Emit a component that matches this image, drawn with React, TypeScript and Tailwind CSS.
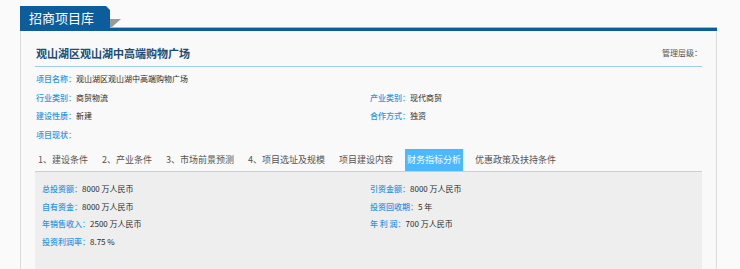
const font = { fontFamily: '"Noto Sans CJK SC", "Noto Sans", sans-serif' };

const infoRows: [string, string][][] = [
  [["项目名称", "观山湖区观山湖中高端购物广场"]],
  [
    ["行业类别", "商贸物流"],
    ["产业类别", "现代商贸"],
  ],
  [
    ["建设性质", "新建"],
    ["合作方式", "独资"],
  ],
  [["项目现状", ""]],
];

const finRows: [string, string][][] = [
  [
    ["总投资额", "8000 万人民币"],
    ["引资金额", "8000 万人民币"],
  ],
  [
    ["自有资金", "8000 万人民币"],
    ["投资回收期", "5 年"],
  ],
  [
    ["年销售收入", "2500 万人民币"],
    ["年 利 润", "700 万人民币"],
  ],
  [["投资利润率", "8.75 %"]],
];

const tabs = [
  "1、建设条件",
  "2、产业条件",
  "3、市场前景预测",
  "4、项目选址及规模",
  "项目建设内容",
  "财务指标分析",
  "优惠政策及扶持条件",
];

function Field({ label, value }: { label: string; value: string }) {
  return (
    <div className="whitespace-nowrap">
      <span className="text-[#2b95e3] font-medium">{label}：</span>
      <span className="text-[#2a2a2a]">{value}</span>
    </div>
  );
}

export default function App() {
  return (
    <div className="w-[740px] h-[269px] overflow-hidden bg-[#fafafa]" style={font}>
      <div className="ml-[20px] w-[697px] pt-[6px]">
        {/* header tab */}
        <div className="flex items-end h-[25px]">
          <div
            className="w-[90px] h-[25px] bg-[#0d5c9b] text-white text-[13px] leading-[23px] pl-[9px]"
            style={{ clipPath: "polygon(0 0, 86px 0, 90px 4px, 90px 100%, 0 100%)" }}
          >
            招商项目库
          </div>
          <div className="relative flex-1 h-[4px]">
            <div className="h-[1px] bg-[#8cbde3]" />
            <div className="h-[3px] bg-[#0d5c9b]" />
            <svg className="absolute left-0 -top-[8px]" width="12" height="8" viewBox="0 0 12 8">
              <polygon points="0,0 11,0 2,8 0,8" fill="#9a9a9a" />
            </svg>
          </div>
        </div>

        {/* panel */}
        <div className="h-[250px] bg-[#f9f9f9] border-l border-r border-[#dcdcdc] pl-[14px] pr-[14px]">
          <div className="flex items-center justify-between h-[36px] pt-[9px] border-b border-[#9ecbef]">
            <div className="text-[11px] font-bold text-[#234a72] pl-[1px]">观山湖区观山湖中高端购物广场</div>
            <div className="text-[8px] text-[#555]">管理层级：</div>
          </div>

          <div className="mt-[3px] text-[8px] leading-[18.5px] pl-[1px]">
            {infoRows.map((row, i) => (
              <div key={i} className="grid grid-cols-[334px_1fr]">
                {row.map(([l, v]) => (
                  <Field key={l} label={l} value={v} />
                ))}
              </div>
            ))}
          </div>

          {/* tabs */}
          <div className="mt-[5px] flex gap-[10px] border-b border-[#b4d5ee] text-[9px] text-[#555] pl-[1px]">
            {tabs.map((t) => (
              <div
                key={t}
                className={
                  t === "财务指标分析"
                    ? "h-[22px] leading-[22px] px-[2px] bg-[#4cb8ff] text-white"
                    : "h-[22px] leading-[22px] px-[2px]"
                }
              >
                {t}
              </div>
            ))}
          </div>

          <div className="h-[100px] bg-[#eeeeee] pt-[8px] pl-[7px] text-[8px] leading-[17.5px]">
            {finRows.map((row, i) => (
              <div key={i} className="grid grid-cols-[328px_1fr]">
                {row.map(([l, v]) => (
                  <Field key={l} label={l} value={v} />
                ))}
              </div>
            ))}
          </div>
        </div>
      </div>
    </div>
  );
}
